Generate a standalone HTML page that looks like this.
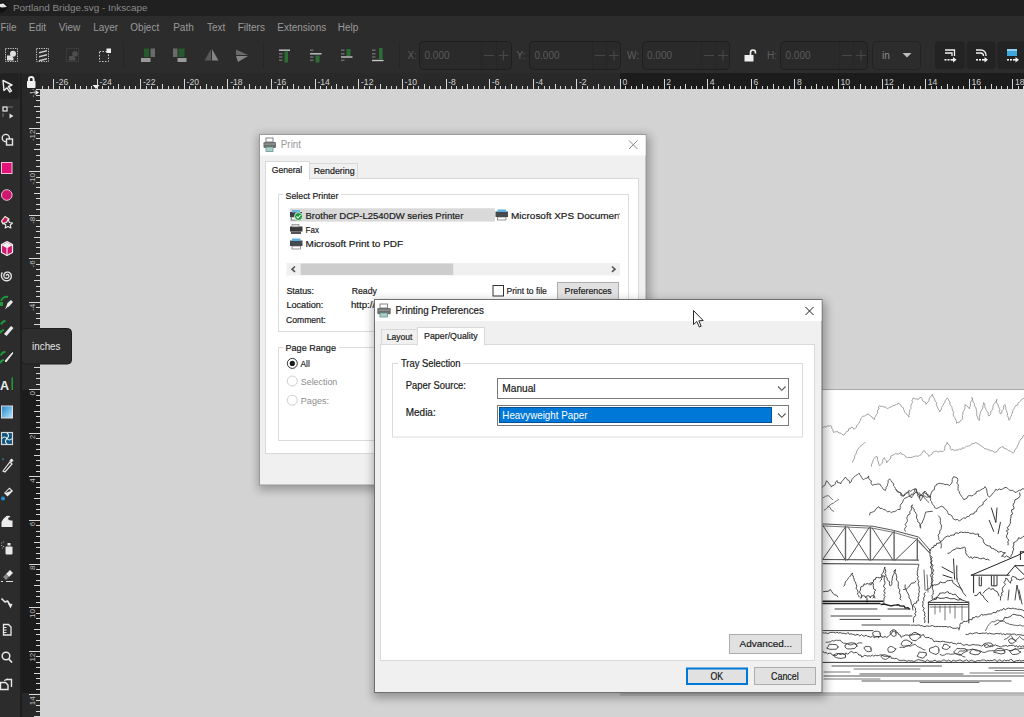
<!DOCTYPE html>
<html><head><meta charset="utf-8">
<style>
html,body{margin:0;padding:0;width:1024px;height:717px;overflow:hidden;background:#d3d3d3;}
svg{display:block;font-family:"Liberation Sans",sans-serif;}
</style></head>
<body>
<svg width="1024" height="717" viewBox="0 0 1024 717">
<defs>
<linearGradient id="shR" x1="0" x2="1" y1="0" y2="0"><stop offset="0" stop-color="#000" stop-opacity="0.22"/><stop offset="1" stop-color="#000" stop-opacity="0"/></linearGradient>
<linearGradient id="shL" x1="1" x2="0" y1="0" y2="0"><stop offset="0" stop-color="#000" stop-opacity="0.18"/><stop offset="1" stop-color="#000" stop-opacity="0"/></linearGradient>
<linearGradient id="shB" x1="0" x2="0" y1="0" y2="1"><stop offset="0" stop-color="#000" stop-opacity="0.22"/><stop offset="1" stop-color="#000" stop-opacity="0"/></linearGradient>
<linearGradient id="shT" x1="0" x2="0" y1="1" y2="0"><stop offset="0" stop-color="#000" stop-opacity="0.12"/><stop offset="1" stop-color="#000" stop-opacity="0"/></linearGradient>
<filter id="blur5" x="-20%" y="-20%" width="140%" height="140%"><feGaussianBlur stdDeviation="5"/></filter>
<filter id="blur3" x="-20%" y="-20%" width="140%" height="140%"><feGaussianBlur stdDeviation="3"/></filter>
</defs>
<!-- canvas -->
<rect x="0" y="0" width="1024" height="717" fill="#d3d3d3"/>
<!-- title bar -->
<rect x="0" y="0" width="1024" height="16" fill="#202020"/>
<path d="M0 3 L4 2 L8 7 L4 12 L0 13 Z" fill="#111"/>
<path d="M0 4 L3.5 3.5 L7 7 L2 7.5 L0 7 Z" fill="#e8e8e8"/>
<text x="13" y="11.3" font-size="9.9" fill="#8a8a8a">Portland Bridge.svg - Inkscape</text>

<!-- menu + toolbar -->
<rect x="0" y="16" width="1024" height="57" fill="#2c2c2c"/>
<g font-size="10" fill="#9a9a9a">
<text x="0.5" y="31.3">File</text>
<text x="28.8" y="31.3">Edit</text>
<text x="58.8" y="31.3">View</text>
<text x="93.2" y="31.3">Layer</text>
<text x="130.3" y="31.3">Object</text>
<text x="173.2" y="31.3">Path</text>
<text x="207" y="31.3">Text</text>
<text x="237.7" y="31.3">Filters</text>
<text x="277.3" y="31.3">Extensions</text>
<text x="337.8" y="31.3">Help</text>
</g>
<g id="toolbar">
<!-- icon1 select all -->
<rect x="5.5" y="48.5" width="12" height="13" fill="none" stroke="#d0d0d0" stroke-width="1" stroke-dasharray="1.2 1.2"/>
<circle cx="13" cy="53.8" r="3" fill="#e0e0e0"/>
<path d="M7 55.5 h4.5 l2 2.5 v2.5 h-6.5z" fill="#e0e0e0"/>
<!-- icon2 select all in all layers -->
<rect x="36.5" y="48.5" width="12" height="13" fill="none" stroke="#d0d0d0" stroke-width="1" stroke-dasharray="1.2 1.2"/>
<path d="M39 52 l8 -2 v1.5 l-8 2z M39 56 l8 -2 v1.5 l-8 2z M39 60 l8 -2 v1.5 l-8 2z" fill="#cfcfcf"/>
<!-- icon3 dim -->
<rect x="66.5" y="48.5" width="12" height="13" fill="none" stroke="#4a4a4a" stroke-width="1" stroke-dasharray="1.2 1.2"/>
<circle cx="75" cy="54" r="2.8" fill="#4e4e4e"/>
<path d="M69 56 h4.5 l2 2.5 v2 h-6.5z" fill="#4e4e4e"/>
<!-- icon4 -->
<rect x="99.5" y="51.5" width="9" height="10" fill="none" stroke="#cfcfcf" stroke-width="1" stroke-dasharray="1.5 1.5"/>
<rect x="106.5" y="48.5" width="4.5" height="4.5" fill="#efefef"/>
<line x1="123.5" y1="42" x2="123.5" y2="69" stroke="#262626"/>
<!-- rotate icons -->
<rect x="144" y="48.5" width="5" height="8.5" fill="#245a2c"/>
<rect x="150.5" y="48.5" width="4.5" height="8.5" fill="#6a6a6a"/>
<rect x="141" y="58" width="9.5" height="4" fill="#9a9a9a"/>
<rect x="173" y="48.5" width="4.5" height="8.5" fill="#6a6a6a"/>
<rect x="178.5" y="48.5" width="6" height="8.5" fill="#245a2c"/>
<rect x="177.5" y="58" width="9" height="4" fill="#9a9a9a"/>
<!-- flip -->
<path d="M211 49 L204.5 60.5 H211z" fill="#585858"/>
<path d="M212 49 L218.5 60.5 H212z" fill="#858585"/>
<path d="M236 49.5 L248 55 H236z" fill="#6a6a6a"/>
<path d="M236 56 L248 56 L238 62z" fill="#858585"/>
<line x1="263.5" y1="42" x2="263.5" y2="69" stroke="#262626"/>
<!-- align icons -->
<g stroke-width="1.4">
<line x1="279" y1="50.2" x2="290" y2="50.2" stroke="#c8c8c8"/>
<path d="M279 53.8h3.5M279 57h3.5M279 60.3h3.5" stroke="#6a6a6a"/>
<rect x="284.5" y="51.5" width="3.5" height="11" fill="#2a6e35" stroke="none"/>
<line x1="310" y1="53.8" x2="321.5" y2="53.8" stroke="#c8c8c8"/>
<path d="M310 50.2h3.5M310 57h3.5M310 60.3h3.5" stroke="#6a6a6a"/>
<rect x="315.5" y="55.5" width="4" height="7" fill="#2a6e35" stroke="none"/>
<line x1="341" y1="57" x2="352.5" y2="57" stroke="#c8c8c8"/>
<path d="M341 50.2h3.5M341 53.8h3.5M341 60.3h3.5" stroke="#6a6a6a"/>
<rect x="346.5" y="49" width="4" height="7" fill="#2a6e35" stroke="none"/>
<line x1="372" y1="60.5" x2="383.5" y2="60.5" stroke="#c8c8c8"/>
<path d="M372 50.2h3.5M372 53.8h3.5M372 57h3.5" stroke="#6a6a6a"/>
<rect x="379" y="48" width="3.5" height="11.5" fill="#2a6e35" stroke="none"/>
</g>
<line x1="399.5" y1="42" x2="399.5" y2="69" stroke="#262626"/>
<!-- spin boxes -->
<g font-size="10" fill="#5e5e5e">
<text x="407.5" y="59">X:</text>
<text x="516.5" y="59">Y:</text>
<text x="627" y="59">W:</text>
<text x="767" y="59">H:</text>
</g>
<g fill="#2a2a2a" stroke="#1f1f1f" stroke-width="1">
<rect x="419.5" y="41.5" width="92" height="28" rx="4"/>
<rect x="529.5" y="41.5" width="91" height="28" rx="4"/>
<rect x="642.5" y="41.5" width="87" height="28" rx="4"/>
<rect x="780.5" y="41.5" width="87" height="28" rx="4"/>
</g>
<g font-size="10" fill="#5a5a5a">
<text x="424.5" y="59">0.000</text>
<text x="534.5" y="59">0.000</text>
<text x="647" y="59">0.000</text>
<text x="785.5" y="59">0.000</text>
</g>
<g stroke="#262626" stroke-width="1">
<path d="M481.5 42v27M496.5 42v27"/>
<path d="M592.5 42v27M606.5 42v27"/>
<path d="M701.5 42v27M715.5 42v27"/>
<path d="M839.5 42v27M853.5 42v27"/>
</g>
<g stroke="#474747" stroke-width="1.2">
<path d="M484 55.5h10M498.5 55.5h10M503.5 50.5v10"/>
<path d="M595 55.5h10M609 55.5h10M614 50.5v10"/>
<path d="M704 55.5h10M718 55.5h10M723 50.5v10"/>
<path d="M842 55.5h10M856 55.5h10M861 50.5v10"/>
</g>
<!-- lock -->
<rect x="744.5" y="55" width="9" height="6.5" fill="#f0f0f0"/>
<path d="M750.5 55 v-2.5 a2.5 2.5 0 0 1 5 0 v1" fill="none" stroke="#f0f0f0" stroke-width="1.6"/>
<!-- units dropdown -->
<rect x="872.5" y="41.5" width="48" height="28" rx="4" fill="#2c2c2c" stroke="#232323"/>
<text x="882" y="59" font-size="10" fill="#8e8e8e">in</text>
<path d="M902.5 53 h9 l-4.5 4.5z" fill="#bdbdbd"/>
<!-- right buttons -->
<rect x="935" y="41.2" width="29.7" height="28" rx="4" fill="#232323"/>
<rect x="966.5" y="41.2" width="29" height="28" rx="4" fill="#232323"/>
<rect x="997.5" y="41.2" width="40" height="28" rx="4" fill="#232323"/>
<g fill="none" stroke="#f0f0f0" stroke-width="1.3">
<path d="M945 50h9.5v6M945 53h7v3"/>
<path d="M976 50h5a5 5 0 0 1 5 5v1M976 53h4.5a3 3 0 0 1 3 3"/>
</g>
<g fill="#f0f0f0">
<rect x="944.5" y="59" width="2" height="1.6"/><rect x="947.5" y="59" width="2" height="1.6"/><rect x="950.5" y="59" width="3" height="1.6"/><path d="M953 57 l3.5 2.8 l-3.5 2.8z"/>
<rect x="976" y="59" width="2" height="1.6"/><rect x="979" y="59" width="2" height="1.6"/><rect x="982" y="59" width="3" height="1.6"/><path d="M984.5 57 l3.5 2.8 l-3.5 2.8z"/>
<rect x="1007" y="59" width="2" height="1.6"/><rect x="1010" y="59" width="2" height="1.6"/><rect x="1013" y="59" width="3" height="1.6"/><path d="M1015.5 57 l3.5 2.8 l-3.5 2.8z"/>
</g>
<rect x="1007" y="49" width="10" height="7" fill="#3fa7e0"/>
<rect x="1007" y="49" width="10" height="2" fill="#8fd0f0"/>
</g>

<!-- rulers -->
<rect x="0" y="73" width="1024" height="16" fill="#292929"/>
<rect x="620" y="73" width="404" height="16" fill="#1c1c1c"/>
<rect x="0" y="73" width="21" height="644" fill="#2c2c2c"/>
<rect x="20" y="73" width="2" height="644" fill="#1e1e1e"/>
<rect x="22" y="73" width="18" height="644" fill="#292929"/>
<rect x="22" y="390" width="18" height="303" fill="#1c1c1c"/>
<path d="M42.5 86V89 M48.5 86V89 M53.5 79V89 M59.5 86V89 M64.5 86V89 M69.5 86V89 M75.5 84V89 M80.5 86V89 M86.5 86V89 M91.5 86V89 M97.5 79V89 M102.5 86V89 M108.5 86V89 M113.5 86V89 M118.5 84V89 M124.5 86V89 M129.5 86V89 M135.5 86V89 M140.5 79V89 M146.5 86V89 M151.5 86V89 M157.5 86V89 M162.5 84V89 M168.5 86V89 M173.5 86V89 M178.5 86V89 M184.5 79V89 M189.5 86V89 M195.5 86V89 M200.5 86V89 M206.5 84V89 M211.5 86V89 M217.5 86V89 M222.5 86V89 M227.5 79V89 M233.5 86V89 M238.5 86V89 M244.5 86V89 M249.5 84V89 M255.5 86V89 M260.5 86V89 M266.5 86V89 M271.5 79V89 M277.5 86V89 M282.5 86V89 M287.5 86V89 M293.5 84V89 M298.5 86V89 M304.5 86V89 M309.5 86V89 M315.5 79V89 M320.5 86V89 M326.5 86V89 M331.5 86V89 M336.5 84V89 M342.5 86V89 M347.5 86V89 M353.5 86V89 M358.5 79V89 M364.5 86V89 M369.5 86V89 M375.5 86V89 M380.5 84V89 M386.5 86V89 M391.5 86V89 M396.5 86V89 M402.5 79V89 M407.5 86V89 M413.5 86V89 M418.5 86V89 M424.5 84V89 M429.5 86V89 M435.5 86V89 M440.5 86V89 M446.5 79V89 M451.5 86V89 M456.5 86V89 M462.5 86V89 M467.5 84V89 M473.5 86V89 M478.5 86V89 M484.5 86V89 M489.5 79V89 M495.5 86V89 M500.5 86V89 M505.5 86V89 M511.5 84V89 M516.5 86V89 M522.5 86V89 M527.5 86V89 M533.5 79V89 M538.5 86V89 M544.5 86V89 M549.5 86V89 M555.5 84V89 M560.5 86V89 M565.5 86V89 M571.5 86V89 M576.5 79V89 M582.5 86V89 M587.5 86V89 M593.5 86V89 M598.5 84V89 M604.5 86V89 M609.5 86V89 M614.5 86V89 M620.5 79V89 M625.5 86V89 M631.5 86V89 M636.5 86V89 M642.5 84V89 M647.5 86V89 M653.5 86V89 M658.5 86V89 M664.5 79V89 M669.5 86V89 M674.5 86V89 M680.5 86V89 M685.5 84V89 M691.5 86V89 M696.5 86V89 M702.5 86V89 M707.5 79V89 M713.5 86V89 M718.5 86V89 M723.5 86V89 M729.5 84V89 M734.5 86V89 M740.5 86V89 M745.5 86V89 M751.5 79V89 M756.5 86V89 M762.5 86V89 M767.5 86V89 M773.5 84V89 M778.5 86V89 M783.5 86V89 M789.5 86V89 M794.5 79V89 M800.5 86V89 M805.5 86V89 M811.5 86V89 M816.5 84V89 M822.5 86V89 M827.5 86V89 M832.5 86V89 M838.5 79V89 M843.5 86V89 M849.5 86V89 M854.5 86V89 M860.5 84V89 M865.5 86V89 M871.5 86V89 M876.5 86V89 M882.5 79V89 M887.5 86V89 M892.5 86V89 M898.5 86V89 M903.5 84V89 M909.5 86V89 M914.5 86V89 M920.5 86V89 M925.5 79V89 M931.5 86V89 M936.5 86V89 M941.5 86V89 M947.5 84V89 M952.5 86V89 M958.5 86V89 M963.5 86V89 M969.5 79V89 M974.5 86V89 M980.5 86V89 M985.5 86V89 M991.5 84V89 M996.5 86V89 M1001.5 86V89 M1007.5 86V89 M1012.5 79V89 M1018.5 86V89 M1023.5 86V89" stroke="#d8d8d8" stroke-width="1" fill="none"/>
<g font-size="8.6" fill="#d0d0d0"><text x="55.8" y="84.8">-26</text><text x="99.4" y="84.8">-24</text><text x="143.0" y="84.8">-22</text><text x="186.6" y="84.8">-20</text><text x="230.2" y="84.8">-18</text><text x="273.8" y="84.8">-16</text><text x="317.4" y="84.8">-14</text><text x="361.0" y="84.8">-12</text><text x="404.6" y="84.8">-10</text><text x="448.2" y="84.8">-8</text><text x="491.8" y="84.8">-6</text><text x="535.4" y="84.8">-4</text><text x="579.0" y="84.8">-2</text><text x="622.6" y="84.8">0</text><text x="666.2" y="84.8">2</text><text x="709.8" y="84.8">4</text><text x="753.4" y="84.8">6</text><text x="797.0" y="84.8">8</text><text x="840.6" y="84.8">10</text><text x="884.2" y="84.8">12</text><text x="927.8" y="84.8">14</text><text x="971.4" y="84.8">16</text><text x="1015.0" y="84.8">18</text></g>
<path d="M92.5 85 h7 l-3.5 4z" fill="#f0f0f0"/>
<path d="M36 89.5H40 M36 95.5H40 M36 100.5H40 M34 106.5H40 M36 111.5H40 M36 117.5H40 M36 122.5H40 M29 128.5H40 M36 133.5H40 M36 138.5H40 M36 144.5H40 M34 149.5H40 M36 155.5H40 M36 160.5H40 M36 166.5H40 M29 171.5H40 M36 177.5H40 M36 182.5H40 M36 187.5H40 M34 193.5H40 M36 198.5H40 M36 204.5H40 M36 209.5H40 M29 215.5H40 M36 220.5H40 M36 226.5H40 M36 231.5H40 M34 237.5H40 M36 242.5H40 M36 247.5H40 M36 253.5H40 M29 258.5H40 M36 264.5H40 M36 269.5H40 M36 275.5H40 M34 280.5H40 M36 286.5H40 M36 291.5H40 M36 296.5H40 M29 302.5H40 M36 307.5H40 M36 313.5H40 M36 318.5H40 M34 324.5H40 M36 329.5H40 M36 335.5H40 M36 340.5H40 M29 346.5H40 M36 351.5H40 M36 356.5H40 M36 362.5H40 M34 367.5H40 M36 373.5H40 M36 378.5H40 M36 384.5H40 M29 389.5H40 M36 395.5H40 M36 400.5H40 M36 405.5H40 M34 411.5H40 M36 416.5H40 M36 422.5H40 M36 427.5H40 M29 433.5H40 M36 438.5H40 M36 444.5H40 M36 449.5H40 M34 455.5H40 M36 460.5H40 M36 465.5H40 M36 471.5H40 M29 476.5H40 M36 482.5H40 M36 487.5H40 M36 493.5H40 M34 498.5H40 M36 504.5H40 M36 509.5H40 M36 514.5H40 M29 520.5H40 M36 525.5H40 M36 531.5H40 M36 536.5H40 M34 542.5H40 M36 547.5H40 M36 553.5H40 M36 558.5H40 M29 564.5H40 M36 569.5H40 M36 574.5H40 M36 580.5H40 M34 585.5H40 M36 591.5H40 M36 596.5H40 M36 602.5H40 M29 607.5H40 M36 613.5H40 M36 618.5H40 M36 623.5H40 M34 629.5H40 M36 634.5H40 M36 640.5H40 M36 645.5H40 M29 651.5H40 M36 656.5H40 M36 662.5H40 M36 667.5H40 M34 673.5H40 M36 678.5H40 M36 683.5H40 M36 689.5H40 M29 694.5H40 M36 700.5H40 M36 705.5H40 M36 711.5H40 M34 716.5H40" stroke="#d8d8d8" stroke-width="1" fill="none"/>
<g font-size="8" fill="#bdbdbd"><text transform="translate(34.6 85.9) rotate(-90)" text-anchor="end">-14</text><text transform="translate(34.6 129.5) rotate(-90)" text-anchor="end">-12</text><text transform="translate(34.6 173.1) rotate(-90)" text-anchor="end">-10</text><text transform="translate(34.6 216.7) rotate(-90)" text-anchor="end">-8</text><text transform="translate(34.6 260.3) rotate(-90)" text-anchor="end">-6</text><text transform="translate(34.6 303.9) rotate(-90)" text-anchor="end">-4</text><text transform="translate(34.6 347.5) rotate(-90)" text-anchor="end">-2</text><text transform="translate(34.6 391.1) rotate(-90)" text-anchor="end">0</text><text transform="translate(34.6 434.7) rotate(-90)" text-anchor="end">2</text><text transform="translate(34.6 478.3) rotate(-90)" text-anchor="end">4</text><text transform="translate(34.6 521.9) rotate(-90)" text-anchor="end">6</text><text transform="translate(34.6 565.5) rotate(-90)" text-anchor="end">8</text><text transform="translate(34.6 609.1) rotate(-90)" text-anchor="end">10</text><text transform="translate(34.6 652.7) rotate(-90)" text-anchor="end">12</text><text transform="translate(34.6 696.3) rotate(-90)" text-anchor="end">14</text></g>
<path d="M35.5 90 l3.5 2.5 l-3.5 2.5z" fill="#f0f0f0"/>
<!-- canvas -->
<rect x="40" y="89" width="984" height="628" fill="#d3d3d3"/>
<g id="toolbox">
<rect x="0" y="73" width="19.5" height="26" rx="3" fill="#222"/>
<!-- selector arrow -->
<path d="M3 80.5 L12 85 L8.5 86.5 L11.5 91 L9.8 92 L7 87.8 L4 90.5z" fill="none" stroke="#ececec" stroke-width="1.4" stroke-linejoin="round"/>
<!-- node -->
<rect x="3" y="107" width="4" height="4" fill="none" stroke="#e0e0e0" stroke-width="1.3"/>
<path d="M8 107h5M3 113v4" stroke="#777" stroke-width="1"/>
<path d="M9.5 113.5 l4 2.5 l-4 2.5z" fill="#e0e0e0"/>
<!-- shape builder -->
<circle cx="5.8" cy="138" r="3.6" fill="none" stroke="#e8e8e8" stroke-width="1.4"/>
<rect x="6.5" y="139" width="6" height="6" fill="#2c2c2c" stroke="#e8e8e8" stroke-width="1.4"/>
<!-- rect -->
<rect x="1.5" y="162.5" width="10.5" height="11" fill="#e3127a" stroke="#f4c0dc" stroke-width="1"/>
<!-- ellipse -->
<circle cx="6.8" cy="195" r="5.3" fill="#d0176f" stroke="#f0c0d8" stroke-width="1"/>
<!-- star -->
<path d="M1.5 221 L5 216.5 L9 219 L7 223 L3 224z" fill="#c8166a" stroke="#eec" stroke-width="1.2" stroke-linejoin="round"/>
<path d="M8 219.5 l1.5 3 l3 .5 l-2.2 2 l.6 3 l-2.9 -1.5 l-2.8 1.5 l.6 -3 l-2.2 -2 l3 -.5z" fill="#2c2c2c" stroke="#eee" stroke-width="1.1" stroke-linejoin="round"/>
<!-- 3d box -->
<path d="M7 241.5 L12.5 244.5 V252.5 L7 255.5 L1.5 252.5 V244.5z" fill="#d21670" stroke="#eee" stroke-width="1.2" stroke-linejoin="round"/>
<path d="M1.5 244.5 L7 247.5 L12.5 244.5 M7 247.5 V255.5" fill="none" stroke="#eee" stroke-width="1.1"/>
<path d="M2.2 245 L7 242.2 L11.8 245 L7 247.2z" fill="#f0f0f0"/>
<!-- spiral -->
<path d="M6.40 275.80 L6.37 275.74 L6.34 275.67 L6.32 275.60 L6.30 275.52 L6.30 275.44 L6.31 275.36 L6.32 275.27 L6.35 275.18 L6.38 275.09 L6.43 275.01 L6.49 274.93 L6.56 274.85 L6.64 274.77 L6.73 274.71 L6.83 274.65 L6.94 274.60 L7.05 274.57 L7.18 274.54 L7.30 274.52 L7.43 274.52 L7.57 274.54 L7.70 274.56 L7.84 274.61 L7.97 274.66 L8.10 274.73 L8.23 274.82 L8.35 274.92 L8.46 275.03 L8.56 275.16 L8.65 275.30 L8.73 275.45 L8.79 275.61 L8.83 275.78 L8.87 275.96 L8.88 276.14 L8.87 276.33 L8.85 276.52 L8.81 276.71 L8.74 276.89 L8.66 277.08 L8.56 277.26 L8.44 277.42 L8.30 277.58 L8.15 277.73 L7.97 277.87 L7.79 277.98 L7.59 278.08 L7.37 278.17 L7.15 278.23 L6.92 278.27 L6.68 278.29 L6.44 278.28 L6.19 278.25 L5.95 278.20 L5.71 278.12 L5.47 278.02 L5.24 277.89 L5.03 277.74 L4.82 277.57 L4.63 277.38 L4.46 277.16 L4.31 276.93 L4.18 276.68 L4.07 276.42 L3.99 276.14 L3.93 275.86 L3.90 275.56 L3.90 275.26 L3.93 274.96 L3.99 274.66 L4.08 274.36 L4.19 274.07 L4.34 273.79 L4.52 273.53 L4.72 273.27 L4.94 273.04 L5.20 272.82 L5.47 272.63 L5.76 272.47 L6.08 272.33 L6.40 272.22 L6.74 272.14 L7.09 272.10 L7.45 272.08 L7.81 272.11 L8.16 272.16 L8.52 272.26 L8.86 272.38 L9.20 272.54 L9.52 272.74 L9.83 272.97 L10.11 273.22 L10.37 273.51 L10.61 273.82 L10.81 274.16 L10.99 274.51 L11.13 274.89 L11.23 275.28 L11.30 275.68 L11.33 276.09 L11.32 276.51 L11.27 276.93 L11.18 277.34 L11.05 277.74 L10.88 278.14 L10.67 278.52 L10.42 278.88 L10.14 279.22 L9.83 279.53 L9.48 279.81 L9.10 280.06 L8.70 280.28 L8.28 280.45 L7.84 280.59 L7.39 280.69 L6.92 280.74 L6.45 280.75 L5.98 280.71 L5.50 280.63 L5.04 280.50 L4.59 280.32 L4.15 280.10 L3.73 279.84 L3.33 279.54 L2.97 279.20 L2.63 278.83 L2.33 278.42 L2.07 277.98 L1.85 277.51 L1.68 277.02 L1.55 276.52 L1.47 276.00 L1.43 275.47 L1.45 274.94 L1.52 274.41 L1.64 273.88 L1.82 273.37 L2.04 272.87 L2.31 272.39" fill="none" stroke="#e0e0e0" stroke-width="1.4"/>
<!-- pen -->
<path d="M1 301 a6 6 0 0 1 7 -4" fill="none" stroke="#1e9a3a" stroke-width="2"/>
<rect x="0" y="302" width="3" height="4" fill="#1e9a3a"/>
<path d="M5 310 L7.5 303 L11 300 L13 302 L10 305.5z" fill="#eaeaea"/>
<path d="M5 310 l3 -3" stroke="#2c2c2c" stroke-width="0.8"/>
<!-- pencil -->
<path d="M1 324.5 a5 5 0 0 1 4.5 -3.5 M0.5 333.5 a4 3 0 0 1 3.5 -3.5" fill="none" stroke="#1e9a3a" stroke-width="2"/>
<path d="M4 334 L11 326 L13.5 328 L6.5 336z" fill="#eaeaea"/>
<!-- calligraphy -->
<path d="M1 355.5 a4 4 0 0 1 4.5 -3.5 M0.5 363.5 a4 3 0 0 1 3.5 -3.5" fill="none" stroke="#1e9a3a" stroke-width="2"/>
<path d="M5 361 L12.5 352.5 L13 353 L6 362z" fill="#eaeaea" stroke="#eaeaea" stroke-width="1"/>
<!-- text -->
<text x="0" y="390" font-size="12.5" font-weight="bold" fill="#ececec">A</text>
<rect x="11.5" y="377.5" width="1.5" height="12.5" fill="#1e9a3a"/>
<!-- gradient -->
<linearGradient id="gicon" x1="0" y1="0" x2="1" y2="1"><stop offset="0" stop-color="#1d86cf"/><stop offset="1" stop-color="#bfe8fb"/></linearGradient>
<rect x="1.5" y="406" width="11" height="12" fill="url(#gicon)" stroke="#dcdcdc" stroke-width="1"/>
<!-- mesh -->
<rect x="1.5" y="432.5" width="11" height="12" fill="#11547d" stroke="#d8d8d8" stroke-width="1.2"/>
<path d="M2 438.5 q2.5 -3 5 0 t5 0 M7 433 q3 2.5 0 5.5 t0 5.5" fill="none" stroke="#e8f4fc" stroke-width="1.1"/>
<!-- dropper -->
<path d="M3 457.5 q-1.5 2 0 3.2 q1.5 -1.2 0 -3.2z" fill="#2090e0"/>
<path d="M3 471 L10 462 L12 464 L5 472z" fill="none" stroke="#e8e8e8" stroke-width="1.2"/>
<rect x="10" y="459" width="3" height="3" fill="#e8e8e8" transform="rotate(40 11.5 460.5)"/>
<!-- bucket -->
<path d="M4 493 L9.5 487.5 L13 491 L7.5 496.5z" fill="#e8e8e8"/>
<path d="M5 493 L9.5 489 L11 491z" fill="#2c2c2c"/>
<circle cx="3" cy="498.5" r="2" fill="#2090e0"/>
<!-- tweak -->
<path d="M1.5 527 V522 q2 -4 5 -6 q2.5 -1 4 1 q-2.5 0 -2.5 2 q1.5 2 4.5 1.5 V527z" fill="#ececec"/>
<!-- spray -->
<rect x="5.5" y="546.5" width="7" height="8" rx="1" fill="#e8e8e8"/>
<rect x="7.5" y="543" width="3" height="2.5" fill="#e8e8e8"/>
<path d="M1 543h1.2M3 542h1.2M1 545.5h1.2M3 546.5h1.2M2 548h1.2" stroke="#999" stroke-width="1.2"/>
<!-- eraser -->
<path d="M6 574 L10 570 L13 573 L9 577z" fill="#eaeaea"/>
<path d="M3 577 L6 574 L9 577 L6 580z" fill="#888"/>
<path d="M1 581.5h2M6 581.5h7" stroke="#ddd" stroke-width="1.2"/>
<!-- connector -->
<path d="M1.5 598.5 L5 602 L7.5 601 L10 605" fill="none" stroke="#e8e8e8" stroke-width="1.6" stroke-linejoin="round"/>
<path d="M8 603.5 L12.5 604 L10.5 608.5z" fill="#e8e8e8"/>
<!-- pages -->
<path d="M3.5 624.5 h5 l2.5 2.5 v8 h-7.5z" fill="none" stroke="#e8e8e8" stroke-width="1.3"/>
<path d="M4 627.5h2.5M4 630h2.5M4 632.5h2.5" stroke="#e8e8e8" stroke-width="1"/>
<!-- zoom -->
<circle cx="6" cy="656" r="3.8" fill="none" stroke="#e8e8e8" stroke-width="1.5"/>
<path d="M8.8 659 L12 662.5" stroke="#e8e8e8" stroke-width="1.8"/>
<!-- clone -->
<path d="M6 679.5 h5.5 v7.5" fill="none" stroke="#e8e8e8" stroke-width="1.4"/>
<path d="M0.5 682.5 h5 l2.5 2.5 v4.5 h-7.5z" fill="none" stroke="#e8e8e8" stroke-width="1.4"/>
<path d="M4 680.5 l4 -1.5" stroke="#e8e8e8" stroke-width="1.2"/>
</g>
<!-- ruler corner lock -->
<rect x="22" y="73" width="18" height="16" fill="#292929"/>
<path d="M22.5 89 V77.5 a4 4 0 0 1 4 -4 H40 V89z" fill="#242424"/>
<rect x="27" y="81" width="8.5" height="7" rx="0.8" fill="#f0f0f0"/>
<path d="M28.9 81.5 v-2.2 a2.35 2.35 0 0 1 4.7 0 v2.2" fill="none" stroke="#f0f0f0" stroke-width="2"/>

<g id="page">
<rect x="620" y="392" width="404" height="304" fill="#000" opacity="0.10"/>
<rect x="620" y="390" width="404" height="302.5" fill="#fff"/>
<path d="M620 389.5 H1024 M620 693 H1024" stroke="#a8a8a8" stroke-width="1"/>
<g fill="none" stroke-linejoin="round" stroke-linecap="round">
<path d="M822.9 427.5 L824.4 426.8 L826.1 427.1 L827.3 425.9 L829.0 426.1 L830.7 425.5 L831.7 426.8 L831.7 428.5 L833.0 429.7 L833.1 431.4 L833.4 432.3 L835.6 431.8 L837.9 431.7 L838.9 433.0 L840.7 433.0 L841.9 433.9 L843.1 435.1 L844.6 434.3 L845.5 432.8 L846.5 431.5 L848.3 431.0 L848.6 428.9 L850.5 428.6 L851.6 426.9 L853.3 428.0 L854.1 429.4 L855.1 428.3 L856.6 427.3 L856.6 425.6 L858.0 424.6 L858.9 423.3 L859.4 421.8 L860.4 420.6 L860.7 419.0 L861.5 417.7 L862.7 416.3 L864.7 416.0 L866.3 414.8 L868.3 413.8 L869.3 415.2 L870.7 416.1 L872.1 417.0 L872.9 418.6 L874.7 419.4 L874.6 417.7 L875.7 416.3 L876.2 414.8 L877.2 413.4 L877.6 411.9 L877.6 410.1 L879.1 409.0 L878.5 407.0 L879.6 405.6 L881.0 406.6 L882.7 406.3 L884.0 407.2 L885.7 407.2 L887.1 408.5 L888.5 408.1 L889.8 407.2 L891.4 407.0 L892.5 405.7 L894.1 405.6 L895.4 404.9 L896.8 404.3 L898.1 403.5 L899.1 403.3 L899.8 404.6 L901.2 405.6 L901.9 407.0 L903.4 407.8 L903.5 409.6 L904.5 410.9 L904.9 412.4 L906.0 413.6 L907.4 414.5 L908.2 415.8 L909.1 417.2 L908.6 415.6 L909.5 414.2 L909.4 412.6 L909.7 411.1 L909.9 409.6 L911.2 408.3 L910.7 406.6 L911.1 405.2 L911.7 403.7 L912.6 402.4 L911.9 400.7 L912.7 399.3 L913.1 397.9 L914.7 398.7 L916.5 399.0 L918.6 399.3 L919.5 397.8 L921.1 397.2 L922.0 398.4 L922.3 400.0 L923.1 401.3 L924.9 401.9 L925.8 403.1 L926.0 404.4 L926.8 403.1 L927.9 402.0 L928.8 400.8 L929.2 399.2 L929.6 397.7 L930.9 396.7 L931.7 395.4 L932.5 394.2 L932.6 395.9 L933.6 397.3 L934.4 398.7 L934.9 400.2 L935.4 401.7 L936.8 402.9 L936.3 404.8 L937.1 406.2 L937.6 407.7 L938.3 409.2 L939.4 410.5 L939.8 411.9 L940.1 410.4 L941.5 409.4 L941.6 407.6 L942.3 406.3 L943.2 405.0 L943.9 403.6 L944.8 402.4 L945.2 400.8 L945.9 399.4 L947.6 398.1 L948.5 399.4 L948.9 400.9 L950.1 402.0 L949.8 403.8 L950.6 405.2 L951.7 406.5 L952.1 408.1 L952.4 409.7 L952.9 411.2 L953.7 412.6 L953.2 414.5 L953.5 416.1 L954.7 417.4 L955.2 418.9 L956.2 420.3 L956.6 421.8 L956.5 423.3 L957.7 422.4 L959.4 422.3 L960.3 420.7 L961.1 420.2 L962.7 418.9 L962.5 417.2 L962.3 415.5 L963.1 414.0 L962.8 412.3 L963.8 410.9 L964.7 409.4 L964.9 407.8 L964.9 406.2 L965.2 404.4 L966.5 405.9 L968.1 407.1 L969.6 408.9 L969.7 407.2 L970.5 405.6 L970.3 403.8 L970.6 402.1 L971.8 400.7 L972.5 399.1 L971.8 397.4 L972.3 398.9 L972.7 400.5 L973.2 402.0 L974.3 403.3 L974.4 405.0 L975.0 406.4 L975.9 407.9 L976.3 409.4 L976.4 411.0 L976.8 412.5 L976.7 414.2 L976.7 415.9 L977.8 417.2 L977.6 418.9 L979.3 420.5 L979.6 419.0 L979.3 417.3 L979.5 415.8 L980.0 414.3 L980.4 412.8 L980.8 411.3 L981.8 410.0 L982.6 408.7 L983.0 407.2 L982.9 405.5 L983.6 404.1 L983.4 402.7 L984.9 403.9 L984.7 405.7 L985.0 407.3 L985.7 408.8 L986.4 410.3 L987.3 411.7 L988.3 413.0 L988.0 414.8 L988.8 416.1 L990.0 415.0 L990.8 413.7 L990.7 411.9 L991.3 410.5 L992.7 409.5 L993.0 407.9 L992.9 406.2 L993.5 404.8 L994.1 403.4 L995.7 402.4 L996.2 401.0 L996.9 399.3 L996.4 401.0 L996.6 402.5 L997.4 403.9 L998.2 405.2 L998.4 406.8 L999.4 408.1 L999.9 409.5 L999.0 411.3 L999.9 412.7 L1000.5 414.1 L1001.8 412.8 L1001.8 410.9 L1003.1 409.6 L1003.7 408.0 L1003.6 406.0 L1005.0 404.5 L1005.4 406.1 L1005.9 407.6 L1005.8 409.3 L1006.7 410.8 L1006.9 412.4 L1007.7 413.9 L1007.1 415.7 L1008.3 417.1 L1008.5 418.7 L1009.0 420.3 L1010.1 419.1 L1010.1 417.4 L1011.4 416.2 L1011.5 414.6 L1012.2 413.1 L1012.8 411.7 L1012.8 410.0 L1014.0 408.7 L1014.8 407.2 L1015.7 405.7 L1017.6 405.0 L1018.0 403.1 L1019.4 402.1 L1020.7 400.9 L1021.5 399.5 L1023.2 398.5 L1025.0 398.0" stroke="#8c8c8c" stroke-width="0.8"/>
<path d="M852.4 462.2 L853.4 460.1 L854.5 458.1 L854.7 455.7 L856.1 453.8 L856.6 451.6 L857.6 449.5 L858.9 447.8 L860.3 446.2 L861.9 445.0 L863.6 443.8 L865.0 442.3" stroke="#888" stroke-width="0.8"/>
<path d="M871.5 466.2 L871.5 464.4 L872.3 462.9 L872.8 461.2 L873.4 459.6 L874.1 458.2 L875.5 457.1 L877.0 456.4 L877.5 458.0 L877.4 459.8 L878.2 461.3 L878.5 463.0 L878.9 464.6 L879.7 465.8 L880.9 464.4 L882.2 463.1 L882.8 461.4 L882.7 459.4 L884.5 457.7 L885.1 459.6 L886.5 461.0 L886.7 462.8 L887.3 461.3 L888.9 460.5 L889.8 459.2 L890.8 458.0 L890.8 456.1 L892.1 455.3 L893.8 454.8 L895.3 453.6 L897.2 454.2 L899.0 453.9 L900.7 452.5 L901.6 454.2 L903.4 454.4 L904.7 455.4 L905.7 456.8 L907.3 457.5 L908.8 457.5 L910.4 457.6 L912.0 457.3 L913.6 456.7 L915.1 456.2 L916.7 456.0 L918.3 456.2 L919.5 455.5 L921.1 454.6 L922.0 453.2 L922.6 451.6 L924.4 450.6 L925.1 452.1 L926.3 453.3 L927.8 454.2 L928.8 456.5 L930.2 455.2 L931.9 454.3 L932.7 452.3 L934.6 451.4 L936.3 451.1 L938.0 452.1 L939.6 451.4 L941.3 451.2 L942.9 451.7 L944.2 450.4 L944.8 448.7 L944.8 446.9 L945.4 445.2 L947.0 444.1 L947.1 442.3 L947.8 444.0 L949.4 445.1 L950.3 446.7 L950.3 448.7 L951.4 450.0 L953.0 449.4 L954.8 450.5 L956.4 450.0 L958.1 450.1 L959.5 449.1 L961.3 449.4 L962.3 447.8 L964.2 448.2 L965.4 447.1 L966.7 446.3 L968.3 446.0 L969.9 445.8 L971.0 444.4 L972.3 443.6 L974.0 443.5 L975.6 442.5 L977.0 443.2 L978.4 444.1 L979.8 444.7 L981.0 445.8 L982.3 446.7 L983.7 447.5 L984.8 448.9 L986.5 448.9 L987.9 449.8 L989.5 450.0 L990.9 450.8 L992.6 451.0 L993.9 451.9 L994.8 452.3 L996.8 451.8 L997.9 450.3 L998.8 448.7 L1000.3 447.7 L1001.3 447.0 L1003.3 446.8 L1004.3 448.5 L1006.0 448.8 L1007.4 449.6 L1008.6 450.8 L1010.3 451.1 L1011.7 452.0 L1013.3 452.9 L1014.5 451.8 L1014.6 449.9 L1016.0 448.9 L1016.7 447.5 L1017.5 446.1 L1018.0 444.5 L1018.8 443.1 L1019.3 441.5 L1020.2 440.2 L1021.0 438.8 L1022.6 437.9 L1022.9 436.2 L1024.0 435.0" stroke="#8a8a8a" stroke-width="0.8"/>
<path d="M822.1 487.9 L822.7 486.4 L824.6 485.6 L825.4 484.1 L825.8 482.5 L826.6 480.7 L827.7 481.9 L828.7 483.2 L829.5 484.6 L830.9 485.5 L831.4 487.1 L832.2 485.7 L834.2 485.2 L835.3 484.0 L835.7 482.2 L837.0 480.5 L837.6 482.6 L839.7 482.8 L840.7 484.0 L841.2 481.9 L842.8 480.6 L844.0 479.0 L845.1 477.3 L846.6 478.2 L847.2 479.8 L848.9 480.4 L849.6 482.0 L849.7 483.1 L851.2 481.8 L851.7 479.9 L852.7 478.4 L854.3 477.0 L855.7 475.5 L857.7 474.6 L859.2 473.1 L859.8 474.7 L860.8 476.0 L861.7 477.4 L862.4 478.9 L863.8 479.8 L865.1 478.4 L867.3 478.1 L868.7 475.9 L868.6 478.1 L869.5 479.7 L871.4 480.9 L870.9 483.2 L872.4 485.3 L874.4 484.5 L876.6 484.3 L878.2 483.9 L880.3 484.4 L881.1 486.2 L882.4 487.6 L883.2 489.3 L885.4 490.5 L886.0 488.9 L886.2 487.2 L887.3 485.9 L887.6 484.2 L888.2 482.6 L888.0 480.8 L889.6 478.8 L890.9 480.5 L892.0 482.4 L893.8 483.7 L893.5 485.9 L894.8 487.1 L895.5 488.6 L896.4 490.1 L897.2 491.7 L899.0 492.4 L901.0 492.8 L901.8 495.0 L904.0 495.9 L905.0 494.6 L906.3 493.5 L907.8 492.7 L908.7 490.6 L910.8 491.3 L912.4 489.9 L914.2 489.1 L916.6 489.2 L916.4 491.1 L917.9 492.4 L917.6 494.4 L917.8 496.2 L919.2 497.5 L920.0 499.1 L920.4 500.8 L921.4 499.4 L922.2 497.9 L922.7 496.2 L923.4 494.6 L923.2 492.7 L925.0 491.0 L926.3 492.4 L927.0 494.4 L928.9 495.2 L930.0 496.8" stroke="#4a4a4a" stroke-width="0.9"/>
<path d="M823.1 497.8 L825.4 496.3 L828.3 495.6 L830.5 497.6 L832.6 499.7" stroke="#555" stroke-width="0.8"/>
<path d="M838.7 499.5 L836.9 500.6 L835.2 501.6 L833.6 503.1 L831.7 503.9 L830.0 505.0 L828.1 506.8 L826.4 508.8 L824.2 510.2" stroke="#555" stroke-width="0.8"/>
<path d="M827.7 506.3 L830.1 507.5 L831.3 510.0 L833.6 511.3" stroke="#555" stroke-width="0.8"/>
<path d="M869.6 515.0 L870.1 512.7 L871.8 512.3 L873.5 511.7 L875.0 510.8 L875.9 509.1 L877.0 507.9 L878.8 506.7 L879.9 508.5 L882.0 508.2 L883.3 509.5 L885.1 509.7 L886.4 510.8 L887.8 511.9 L889.7 511.2 L891.3 512.8 L892.8 511.7 L894.7 511.6 L896.3 510.7 L897.7 509.4 L900.1 509.5 L900.2 507.6 L900.2 505.7 L900.9 504.1 L902.3 502.9 L902.9 501.3 L903.5 499.4 L905.1 498.2 L907.0 497.4 L908.7 496.4 L910.6 496.1 L911.3 494.1 L913.4 494.2 L914.9 493.4 L916.3 491.5 L917.1 493.6 L918.8 494.3 L920.1 495.5 L922.0 495.7 L923.6 496.0 L925.2 496.1 L926.7 497.3 L928.4 496.8 L930.0 496.8" stroke="#444" stroke-width="0.9"/>
<path d="M895.9 489.4 L896.9 490.6 L898.2 491.5 L899.6 492.4 L900.7 493.6 L900.9 495.6 L902.2 496.0 L904.0 496.0 L904.4 494.1 L905.5 493.3 L906.9 492.7 L908.5 491.5 L909.0 493.1 L908.9 495.0 L909.9 496.4 L911.8 497.7 L912.2 496.2 L913.2 495.2 L913.9 493.9 L914.0 492.4 L914.9 491.2 L914.4 489.4 L915.4 488.6 L916.4 490.0 L916.5 491.6 L917.3 493.0 L918.4 494.3 L919.4 495.6 L919.7 497.9 L919.8 495.8 L921.4 495.1 L922.3 493.8 L923.3 492.7 L924.4 492.1 L924.9 493.5 L926.8 493.8 L927.2 495.3 L928.6 496.1 L929.2 497.4" stroke="#444" stroke-width="0.9"/>
<path d="M930.1 496.8 L930.6 495.2 L931.0 493.6 L931.7 492.1 L932.5 490.6 L934.4 489.7 L934.5 487.9 L934.8 486.2 L936.6 485.2 L936.5 484.3 L938.4 483.6 L940.2 483.3 L941.8 483.7 L943.5 483.8 L945.1 484.6 L946.9 484.4 L948.5 484.9 L949.7 485.5 L950.8 484.2 L951.9 482.9 L952.2 481.4 L952.2 479.6 L952.8 478.1 L953.5 476.7 L955.2 477.1 L957.1 477.9 L957.8 479.5 L957.7 481.3 L956.7 483.2 L958.5 484.7 L958.1 486.6 L958.1 488.3 L957.9 490.1 L959.4 491.7 L959.4 493.2 L960.6 494.6 L961.4 496.2 L962.5 497.6 L963.8 499.8 L965.3 499.0 L966.9 498.3 L967.8 496.2 L969.3 495.5 L971.3 495.9 L973.0 495.5 L974.2 494.2 L975.9 493.6 L976.3 491.7 L977.9 491.1 L979.6 490.8 L980.9 489.8 L982.3 489.0 L983.8 488.4 L985.1 486.6 L986.1 488.2 L986.8 489.9 L986.9 491.8 L987.4 493.6 L987.7 495.5 L989.5 497.1 L990.7 495.6 L992.2 494.5 L993.2 492.7 L994.6 491.5 L995.7 489.3 L997.7 490.2 L999.1 488.9 L1001.1 489.7 L1002.6 488.9 L1004.2 487.9 L1006.2 487.3 L1007.6 488.3 L1008.8 489.6 L1010.2 490.5 L1012.2 490.3 L1013.7 491.0 L1014.9 492.4 L1016.5 492.0 L1017.9 491.1 L1019.3 490.2 L1021.0 490.3 L1022.2 488.7 L1024.0 489.0" stroke="#444" stroke-width="0.9"/>
<path d="M930.3 496.7 L930.7 498.4 L930.5 500.3 L931.7 501.7 L931.9 503.5 L933.3 504.8 L934.3 506.2 L934.4 507.5 L936.4 508.6 L938.1 507.9 L939.8 507.0 L941.5 506.3 L943.4 506.9 L944.3 508.5 L945.8 509.5 L947.1 510.7 L947.7 512.6 L948.4 514.2 L950.5 514.8 L951.9 515.9 L952.6 517.6 L953.5 519.1 L955.3 519.9 L957.3 519.4 L959.3 520.8 L960.8 520.0 L962.2 518.9 L963.6 517.8 L965.7 518.4 L966.8 516.6 L968.8 516.6 L970.0 514.8 L971.7 514.0 L973.9 513.9 L974.4 512.1 L976.4 511.7 L976.9 510.0 L977.7 508.4 L978.8 507.2 L980.2 506.2 L981.6 505.3 L983.1 504.5 L983.2 502.3 L984.6 501.4 L985.5 500.0 L987.0 499.1" stroke="#444" stroke-width="0.9"/>
<path d="M1019.5 492.9 L1020.2 495.3 L1019.5 496.7 L1018.6 498.0 L1017.1 498.8 L1015.1 499.7 L1014.6 501.2 L1014.5 502.7 L1013.4 504.0 L1013.1 505.5 L1014.0 507.4 L1013.8 509.0 L1011.6 509.9 L1011.6 511.7 L1012.8 513.8 L1010.9 515.0 L1011.1 516.8 L1010.7 518.4 L1010.4 520.1 L1010.4 521.7 L1010.4 523.4 L1009.4 524.8 L1008.8 526.3 L1007.1 527.6 L1008.6 529.6 L1006.3 530.7 L1007.7 532.4 L1007.5 534.0 L1006.5 535.7 L1006.6 537.2 L1007.7 538.7 L1008.7 540.2 L1007.8 541.9 L1008.2 543.4 L1008.0 545.0" stroke="#333" stroke-width="0.9"/>
<path d="M991.4 508 L995.9 522.5 L997 508 M989.2 520.3 L993.7 531.4 M1000.4 522.5 L998.1 533.7" stroke="#333" stroke-width="1.0"/>
<path d="M905.4 531.3 L904.5 529.4 L905.1 527.9 L906.4 526.5 L905.2 524.6 L906.2 523.1 L907.2 521.7 L907.4 520.2 L906.8 518.1 L907.4 516.5 L908.1 514.9 L910.1 513.9 L909.6 511.9 L910.9 510.4 L911.7 508.7 L911.2 506.7 L912.4 504.8 L911.8 506.7 L913.0 507.9 L914.2 509.0 L914.0 510.8 L915.3 511.9 L916.0 513.5 L917.0 514.9 L916.4 517.0 L916.7 518.7 L917.8 520.1 L917.7 521.8 L919.8 523.0 L919.9 524.7 L920.0 526.4 L920.4 528.0" stroke="#444" stroke-width="0.9"/>
<path d="M919.4 492.8 L920.7 494.7 L922.8 496.0 L924.3 497.7 L925.7 499.4 L927.3 500.9 L928.9 502.4" stroke="#444" stroke-width="0.9"/>
<path d="M920.7 527.3 L920.3 524.7 L922.1 523.1 L922.8 520.9 L923.7 518.9 L924.5 516.8 L925.0 514.6 L925.5 512.2 L927.8 511.8 L930.0 511.5 L932.3 511.3" stroke="#444" stroke-width="0.9"/>
<path d="M938.5 515.9 L940.2 517.9 L940.5 520.3 L940.1 522.8 L941.4 525.1 L941.4 527.2 L941.0 529.2 L939.7 531.0 L939.7 533.1 L938.1 535.1 L938.7 537.3 L938.8 539.5 L940.4 541.4 L941.1 543.6 L941.4 545.7 L941.0 548.0" stroke="#444" stroke-width="0.9"/>
<path d="M823 523.9 L873.4 526.3 L893.5 530.4 L918.5 537 L930.3 550.6" stroke="#555" stroke-width="1.0"/>
<path d="M823 525.9 L873.4 528.3 L893.5 532.4 L917.5 539.3 L929.3 552.6" stroke="#666" stroke-width="0.9"/>
<path d="M823 559.5 L918.5 560.1 M823 563.6 L918.5 564.2" stroke="#555" stroke-width="1.1"/>
<path d="M845.5 526.5 V560 M870.4 527.5 V560 M894.1 531 V560 M917.3 538.5 V560" stroke="#666" stroke-width="1.4"/>
<path d="M823 525.7 L845.5 560.1 M823 558.9 L845.5 526.9 M847.9 526.9 L869.2 560.1 M847.9 560.1 L869.2 527.5 M872.2 528 L893 560.1 M872.2 560.1 L893 532.2 M895.3 560.1 L916.1 539.9 M918.5 541.7 L929.7 553" stroke="#555" stroke-width="1.0"/>
<path d="M843.7 586.2 L844.8 585.0 L845.0 583.4 L845.4 581.9 L846.4 580.7 L847.5 579.5 L848.2 578.2 L849.3 577.1 L850.5 575.9 L851.2 574.5 L852.6 572.9 L851.9 574.8 L853.4 575.9 L853.4 577.6 L854.2 579.0 L854.1 580.7 L855.5 581.9 L855.8 583.4 L856.3 584.9 L856.8 586.3 L856.0 588.1 L856.9 589.5 L857.8 590.9 L858.1 592.4 L857.4 594.2 L858.7 595.4 L859.1 596.9" stroke="#333" stroke-width="0.9"/>
<path d="M880.0 581.3 L881.4 580.0 L881.5 578.3 L882.5 576.9 L881.4 574.9 L882.4 573.5 L883.4 572.1 L883.8 570.5 L884.3 569.0 L884.8 567.0 L884.8 568.6 L885.5 570.1 L885.8 571.7 L884.9 573.6 L886.0 575.0 L885.8 576.7 L887.2 577.9 L887.1 579.7 L888.5 580.7 L889.5 581.9 L889.4 583.7 L889.8 585.2 L890.5 586.1 L891.7 584.7 L892.0 583.2 L891.7 581.6 L892.2 580.1 L892.2 578.5 L892.6 577.0 L893.0 575.5 L893.9 574.2 L894.3 572.7 L893.9 571.0 L895.6 569.4 L895.3 571.1 L895.0 572.7 L896.2 574.1 L896.4 575.7 L896.9 577.2 L896.2 579.0 L896.9 580.4 L898.1 581.8 L898.4 583.3 L898.2 585.0 L898.2 586.5 L898.4 588.0 L899.6 589.4 L899.8 590.9 L899.2 592.6 L900.0 594.0 L900.5 595.4 L900.7 596.9 L899.9 598.7 L901.0 600.0" stroke="#333" stroke-width="0.9"/>
<path d="M861.0 598.0 A2.0 2.0 0 0 1 865.7 598.0 A2.3 2.3 0 0 1 870.3 598.0 A2.0 2.0 0 0 1 875.0 598.0" stroke="#333" stroke-width="0.9"/>
<path d="M860.8 598.0 L861.5 596.3 L861.6 594.7 L860.1 593.2 L859.6 591.7 L860.4 590.3 L860.5 588.2 L861.2 586.5 L863.7 585.9 L864.0 583.8 L865.7 584.4 L867.2 583.4 L868.9 584.2 L870.4 583.1 L872.6 582.7 L873.5 584.0 L873.1 585.8 L873.5 587.3 L873.6 588.9 L875.8 590.2 L874.4 591.5 L874.5 593.3 L873.8 594.8 L874.1 596.6 L873.0 598.0" stroke="#333" stroke-width="0.9"/>
<path d="M867 598 V602" stroke="#333" stroke-width="1"/>
<path d="M823.5 591.7 L825.7 591.4 L828.1 591.3 L830.4 589.5 L831.6 591.4 L832.8 593.1 L834.2 594.7 L836.6 595.2 L837.8 596.9" stroke="#333" stroke-width="0.9"/>
<path d="M903.6 589.5 L906.5 588.9 L908.5 587.3 L910.0 585.0 L911.6 583.1 L914.4 582.9 L916.0 581.0" stroke="#333" stroke-width="0.9"/>
<path d="M869.8 584.9 L871.6 584.4 L872.2 582.8 L873.5 581.9 L873.5 579.9 L875.4 579.5 L875.9 577.5 L877.6 577.4 L879.4 577.9 L881.0 577.4 L882.2 575.8 L884.6 576.0 L884.3 577.5 L884.1 579.1 L884.4 580.7 L885.0 582.2 L884.8 583.8 L883.9 585.3 L883.6 586.9 L885.4 588.4 L884.4 590.0 L883.9 591.6 L885.3 593.3 L883.6 594.8 L885.0 596.5 L884.0 598.1 L884.0 599.7 L883.8 601.4 L884.0 603.0" stroke="#333" stroke-width="0.9"/>
<path d="M918.9 564.9 L918.4 566.5 L917.8 568.2 L917.9 569.9 L917.2 571.6 L917.4 573.3 L917.1 575.0 L918.3 576.5 L917.4 578.4 L918.0 580.0 L918.9 581.6 L918.1 583.4 L918.4 585.0 L919.0 586.5 L919.4 588.0 L918.8 589.5 L919.4 591.1 L919.2 592.5 L918.5 594.0 L919.1 595.6 L918.3 597.0 L918.1 598.5 L918.7 600.6 L916.7 601.1 L916.4 603.1 L914.3 603.4 L913.0 605.2 L914.1 606.8 L915.6 608.2 L915.4 610.3 L916.2 612.1 L914.7 613.4 L915.9 615.5 L914.1 616.8 L913.4 618.4 L913.5 620.2 L913.5 622.0" stroke="#333" stroke-width="0.9"/>
<path d="M930.9 556.1 L932.3 557.5 L930.9 559.2 L932.0 560.7 L931.3 562.3 L931.5 563.9 L933.2 565.3 L932.1 567.0 L932.0 568.5 L933.9 570.1 L933.2 571.5 L932.3 573.0 L933.4 574.5 L931.8 575.9 L932.9 577.5 L931.8 579.0 L933.0 580.5 L932.2 582.0 L931.3 583.4 L932.6 585.0 L932.6 586.5 L932.2 588.0 L932.7 589.5 L933.3 590.9 L933.1 592.5 L933.3 594.0 L931.8 595.6 L932.4 597.0 L932.1 598.6 L933.0 600.0" stroke="#333" stroke-width="0.9"/>
<path d="M925.4 592.5 L923.9 593.9 L925.0 595.7 L924.0 597.1 L923.6 598.7 L923.9 600.3 L922.7 601.8 L923.1 603.4 L922.8 605.0 L922.6 606.8 L924.4 608.2 L923.0 610.2 L924.1 611.7 L924.9 613.3 L924.4 615.0 L925.4 616.5 L923.9 618.0 L924.7 619.5 L925.0 621.0 L924.7 622.5" stroke="#333" stroke-width="0.9"/>
<path d="M924 570 L925 590 M927 575 L928 592" stroke="#444" stroke-width="0.8"/>
<path d="M930.3 550.4 L931.1 548.9 L931.9 547.5 L933.7 547.4 L934.0 545.3 L936.1 545.5 L936.5 543.6 L938.1 543.2 L939.9 542.9 L940.9 541.3 L942.4 540.6 L943.5 539.1 L944.5 537.7 L946.0 536.8 L947.6 536.0 L949.5 536.4 L950.8 535.4 L952.4 535.0 L954.1 535.2 L955.1 533.2 L956.8 532.8 L958.4 533.5 L960.0 532.2 L961.6 532.1 L963.2 532.7 L964.8 532.2 L966.4 532.6 L968.1 532.3 L969.6 533.2 L971.3 533.5 L973.1 533.1 L974.6 534.2 L976.3 534.2 L978.6 534.0 L978.5 536.4 L980.6 536.9 L981.9 538.1 L983.1 539.3 L983.4 541.4 L984.1 543.1 L985.4 544.5 L987.1 545.4 L988.6 545.9 L990.2 546.1 L991.0 548.0 L992.5 548.5 L994.1 548.8 L995.2 550.1 L996.8 550.4 L998.0 552.1 L999.7 551.9 L1001.5 551.3 L1003.0 552.8 L1005.5 552.8 L1003.6 553.8 L1002.8 555.4 L1001.5 556.3 L1003.2 555.9 L1004.8 557.4 L1006.5 555.8 L1008.2 556.9 L1009.8 557.7 L1010.8 556.6 L1011.3 555.1 L1012.4 553.7 L1012.5 552.1 L1013.1 550.6 L1013.8 549.1 L1012.9 547.3 L1013.5 545.8 L1013.8 544.2 L1013.7 542.6 L1015.3 541.9 L1016.6 540.8 L1017.9 539.9 L1018.5 537.8 L1020.7 538.4 L1022.4 537.3 L1024.0 536.0" stroke="#333" stroke-width="0.9"/>
<path d="M947.9 553.3 L949.6 553.1 L950.8 551.8 L952.1 550.7 L953.5 549.8 L955.1 549.3 L956.5 548.1 L958.3 548.2 L960.1 548.6 L961.6 548.0 L963.2 547.8 L964.2 546.8 L965.4 548.1 L965.3 549.7 L965.9 551.2 L965.6 552.8 L966.5 554.2 L967.1 555.3 L968.2 556.5 L969.4 557.7 L971.3 556.8 L972.5 558.7 L974.2 556.9 L975.8 557.4 L977.5 557.4 L979.2 558.4 L980.8 558.8 L982.3 558.4 L984.3 558.1 L985.6 559.7 L987.6 559.2 L989.2 560.1" stroke="#333" stroke-width="0.9"/>
<path d="M953.5 559 L954.6 579.1 M942 567 L953 573 M943 575 L952 578 M956.8 565.7 L956.8 579.1" stroke="#333" stroke-width="1.0"/>
<path d="M957.2 578.9 L957.1 581.2 L958.3 582.8 L959.1 584.7 L960.0 586.5 L960.4 588.5 L962.0 590.0 L962.9 592.3 L964.4 594.2 L966.0 596.0" stroke="#333" stroke-width="0.9"/>
<path d="M929.4 550.0 L930.2 552.1 L929.9 554.3 L930.3 556.4 L930.9 558.6 L931.2 560.7 L930.7 562.9 L931.7 565.0 L930.4 567.1 L931.6 569.2 L931.8 571.2 L931.7 573.3 L930.4 575.4 L931.4 577.5 L931.7 579.6 L931.9 581.6 L931.9 583.7 L931.2 585.8" stroke="#333" stroke-width="0.9"/>
<path d="M926.2 590.3 L927.5 589.4 L928.9 588.7 L930.3 587.9 L930.9 585.9 L932.8 586.0 L933.9 584.7 L935.8 585.0 L937.4 584.4 L939.1 583.9 L940.1 581.8 L942.1 582.7 L943.7 582.7 L945.4 582.6 L946.9 580.7 L948.6 580.7 L950.3 580.4 L952.6 580.3 L952.8 582.6 L954.1 583.7 L955.6 584.6 L956.6 586.0 L958.1 586.8 L959.8 587.4 L961.3 588.3 L962.0 590.0" stroke="#333" stroke-width="0.9"/>
<path d="M934.4 599.5 L936.4 599.1 L936.5 597.2 L937.7 596.2 L938.9 595.1 L939.8 593.1 L941.5 593.1 L943.1 592.8 L944.9 593.2 L946.3 592.1 L948.1 591.7 L949.0 593.5 L950.8 593.2 L951.9 594.4 L953.5 594.6 L955.5 594.2 L956.5 595.9 L957.9 596.9 L958.9 598.4 L960.8 598.8 L962.0 600.0" stroke="#333" stroke-width="0.9"/>
<path d="M971.3 575.2 L1017.1 555.7 L1024 552 M971.3 575.2 H1009.3 M1007 575.2 L1014.9 565.7 L1024 574.6 M1014.9 565.7 H1024 M973.6 575.8 V592.5 M1020.4 551.8 V559.6 M1024 551.8 H1020.4" stroke="#222" stroke-width="1.0"/>
<path d="M979.2 576.9 V585.8 H981.4 V576.9 M991.4 575.8 V585.8 H997 V575.8 M994 576 V585.8" stroke="#333" stroke-width="1.0"/>
<path d="M1000.4 600.1 L1000.6 598.4 L1000.5 596.5 L1002.2 595.2 L1001.2 593.1 L1003.1 591.9 L1002.4 589.8 L1002.4 588.3 L1003.2 586.9 L1004.6 585.6 L1005.4 584.2 L1003.9 582.3 L1005.2 581.0 L1005.6 579.5 L1005.5 578.4 L1007.5 578.9 L1008.0 580.5 L1009.2 581.6 L1010.6 583.3 L1010.2 581.4 L1012.0 580.5 L1011.4 578.6 L1011.9 577.2 L1012.8 576.3 L1014.3 577.0 L1016.0 577.4 L1016.6 579.2 L1017.7 579.2 L1019.7 580.0 L1021.1 579.4 L1022.7 579.0 L1024.0 578.0" stroke="#333" stroke-width="0.9"/>
<path d="M1008 600 L1009 590 M1015 600 L1017 585 L1020 600 M1019 590 L1022 604" stroke="#333" stroke-width="0.9"/>
<path d="M983.2 593.2 L984.8 591.1 L986.9 589.5 L989.1 587.8 L990.8 589.4 L993.3 588.5 L994.4 590.4 L997.1 591.5 L998.2 593.7 L999.0 596.0" stroke="#333" stroke-width="0.9"/>
<path d="M974.7 595.6 L977.2 595.3 L978.3 593.3 L980.2 591.9 L980.7 594.4 L983.1 595.7 L984.1 597.9 L986.0 600.0 L988.0 602.0" stroke="#333" stroke-width="0.9"/>
<path d="M928.4 602.4 H968.8 V622.9 M928.4 602.4 V622.9 M929 604.6 H968" stroke="#333" stroke-width="1.0"/>
<path d="M930 607 H968 M935 606 V614 M945 606 V620 M955 606 V618 M962 606 V620 M940 606 V612 M950 606 V613" stroke="#555" stroke-width="0.8"/>
<path d="M928.2 602.3 L930.2 601.3 L932.1 600.2 L933.9 598.8 L936.0 597.8 L938.0 597.5 L940.0 598.5 L942.0 598.2 L944.0 598.3 L946.0 597.5 L948.0 597.9 L949.9 598.7 L952.0 598.8 L954.1 598.5 L956.0 599.3 L957.9 600.2 L960.1 599.6 L962.3 600.1 L964.5 600.7 L966.5 601.8 L968.8 602.0" stroke="#333" stroke-width="0.9"/>
<path d="M822.8 601.3 H882.8 M822.8 603.4 H880" stroke="#222" stroke-width="1.5"/>
<path d="M881.3 604.5 L883.7 604.0 L885.8 604.5 L887.9 605.1 L890.0 605.7 L892.0 605.8 L893.9 605.1 L896.0 605.1 L898.0 604.7 L899.7 605.7 L901.7 606.1 L904.0 606.0 L905.3 608.1 L907.7 607.6 L909.3 609.0" stroke="#222" stroke-width="1.4"/>
<path d="M888 609 H910" stroke="#333" stroke-width="1.0"/>
<path d="M905.2 584.9 L905.0 587.4 L906.0 589.4 L906.8 591.5 L908.0 593.5 L909.0 595.6 L909.1 597.9 L910.6 599.8 L911.0 601.9 L911.4 603.9 L912.5 605.8 L912.6 608.0 L913.0 610.0" stroke="#333" stroke-width="0.9"/>
<path d="M835 609 H877 M831 616 H912 M840 619.4 H880 M862 625 H910 M822.8 630.6 H873" stroke="#444" stroke-width="1.0"/>
<path d="M911.3 625.2 L912.8 625.2 L914.3 625.0 L915.8 625.4 L917.4 625.2 L919.0 624.8 L920.4 625.8 L922.0 625.5 L923.4 626.3 L925.0 626.7 L926.5 625.9 L928.0 626.1 L929.5 626.4 L931.0 625.9 L932.5 625.5 L934.0 626.4 L935.5 626.7 L937.0 626.5 L938.5 626.4 L939.9 626.6 L941.5 626.5 L943.1 626.7 L944.8 626.5 L946.4 626.5 L947.9 627.3 L949.6 626.5 L951.1 627.3 L952.6 628.2 L954.2 628.3 L955.8 628.3 L957.5 627.8 L959.0 628.5" stroke="#333" stroke-width="0.9"/>
<path d="M958.9 630.0 L959.3 628.2 L959.9 626.5 L959.9 624.6 L960.5 623.2 L962.4 623.2 L963.6 621.2 L965.5 621.5 L967.3 621.2 L968.7 619.9 L970.2 619.5 L972.0 619.8 L972.6 617.5 L974.4 617.8 L975.5 616.5 L977.4 617.0 L978.8 616.8 L980.2 615.6 L981.5 614.5 L983.3 615.1 L984.8 614.7 L986.4 614.8 L987.9 614.1 L989.5 614.0 L991.1 614.1 L992.5 613.1 L994.0 612.3 L996.0 612.8 L997.1 610.8 L999.0 611.1 L1000.4 610.0 L1002.3 610.1 L1003.7 608.2 L1005.2 610.0 L1006.8 608.7 L1008.3 608.1 L1009.9 608.5 L1011.4 608.8 L1013.0 608.0 L1014.5 608.8 L1016.1 608.8 L1017.5 609.4 L1019.3 609.2 L1020.9 609.6 L1022.6 610.0 L1024.0 611.0" stroke="#333" stroke-width="0.9"/>
<path d="M966.0 634.4 L967.6 634.6 L969.1 633.8 L970.6 633.2 L972.3 634.0 L973.8 633.3 L975.3 632.9 L976.8 632.6 L978.5 633.6 L980.0 633.5 L981.6 633.3 L983.2 633.1 L984.7 633.3 L986.3 632.8 L987.9 634.1 L989.5 633.2 L991.1 633.7 L992.6 634.0 L994.2 634.1 L995.8 633.6 L997.4 633.4 L999.0 633.9 L1000.6 633.3 L1002.1 634.5 L1003.7 633.8 L1005.2 634.7 L1006.8 633.8 L1008.4 634.1 L1010.0 634.0 L1011.5 634.4 L1013.1 634.1 L1014.7 634.0 L1016.2 635.2 L1017.8 634.6 L1019.3 634.7 L1020.9 634.9 L1022.4 635.3 L1024.0 635.4" stroke="#333" stroke-width="0.9"/>
<path d="M994.9 624.9 L996.8 624.0 L998.5 622.9 L999.9 621.3 L1002.1 620.9 L1003.7 619.6 L1004.7 617.3 L1007.2 617.7 L1009.2 617.0 L1011.2 616.0 L1012.8 614.3 L1014.8 614.5 L1017.2 615.2 L1019.8 615.3 L1022.1 616.3 L1024.0 618.0" stroke="#333" stroke-width="0.9"/>
<path d="M985.5 630.5 L986.6 628.6 L987.5 626.5 L988.7 624.8 L990.2 623.2 L991.9 621.6 L994.1 621.9 L995.9 620.8 L997.9 620.0 L999.8 620.6 L1001.8 621.2 L1004.2 621.1 L1005.8 623.0 L1007.9 623.4 L1009.9 624.4 L1012.0 624.6 L1013.9 625.2 L1015.9 625.3 L1017.9 625.7 L1020.1 624.9 L1022.0 626.0 L1024.0 626.0" stroke="#444" stroke-width="0.8"/>
<path d="M822.8 632.8 L824.4 633.2 L825.9 632.7 L827.5 633.6 L829.1 633.0 L830.7 632.4 L832.2 632.4 L833.8 632.3 L835.4 633.0 L836.9 632.2 L838.5 633.1 L840.1 632.5 L841.6 633.2 L843.2 633.3 L844.8 633.4 L846.3 634.1 L848.0 632.4 L849.3 634.3 L850.9 633.8 L852.4 634.2 L853.9 634.6 L855.3 635.2 L857.0 634.5 L858.5 634.8 L859.8 636.0 L861.6 634.5 L862.9 635.8 L864.5 636.1 L866.1 635.1 L867.6 636.4 L869.2 636.6 L870.8 637.3 L872.6 636.2 L874.1 637.6 L875.8 636.8 L877.4 636.8 L878.9 637.6 L880.5 635.9 L882.0 637.2 L883.6 637.1 L885.2 636.5 L886.7 637.5 L888.1 636.6 L889.3 635.4 L890.4 634.1 L891.9 633.0 L892.6 630.7 L894.4 631.6 L896.3 632.1 L898.0 632.8 L898.5 634.4 L900.3 635.2 L901.1 637.4 L902.4 636.2 L904.0 635.9 L905.4 635.0 L907.1 635.0 L908.9 635.4 L910.3 634.4 L911.9 634.2 L913.2 632.8 L914.9 632.4 L916.6 632.9 L918.1 633.9 L919.8 634.6 L921.3 635.4 L923.6 634.6 L924.3 636.5 L925.5 637.5 L927.2 637.6 L929.0 637.4 L930.1 638.5 L931.8 638.7 L932.9 639.7 L934.0 641.8 L935.7 641.2 L937.3 641.3 L939.0 641.6 L940.6 641.8 L942.3 641.2 L943.8 641.5 L945.4 641.9 L946.9 642.3 L948.5 642.4 L950.0 642.9 L951.7 642.3 L953.1 643.5 L954.8 643.4 L956.3 644.3 L957.9 643.1 L959.3 643.4 L960.9 643.2 L962.3 644.8 L963.7 645.2 L965.3 644.8 L966.8 644.3 L968.3 645.3 L969.8 645.3 L971.3 645.0 L972.8 644.5 L974.3 644.7 L975.8 645.0 L977.3 644.9 L978.8 645.1 L980.3 645.6 L981.8 646.2 L983.4 644.5 L984.8 645.6 L986.4 644.6 L987.9 644.8 L989.3 646.2 L990.9 645.8 L992.3 646.5 L993.9 645.6 L995.4 644.8 L996.9 645.6 L998.4 646.0 L999.9 646.8 L1001.4 646.9 L1002.9 645.9 L1004.4 645.9 L1005.9 645.3 L1007.4 646.4 L1009.0 645.6 L1010.5 645.5 L1012.0 645.3 L1013.5 645.3 L1015.0 646.7 L1016.5 645.6 L1017.9 647.4 L1019.5 645.6 L1021.0 647.3 L1022.5 645.8 L1024.0 646.6" stroke="#333" stroke-width="0.9"/>
<path d="M823.0 651.3 L824.3 653.0 L826.1 652.5 L827.5 653.9 L829.4 653.2 L831.0 653.3 L832.3 655.1 L834.1 655.4 L835.6 655.5 L837.0 655.1 L838.4 653.6 L840.0 654.5 L841.5 654.4 L842.9 653.7 L844.6 654.5 L845.9 652.9 L847.6 654.1 L849.0 653.4 L850.3 651.8 L851.8 651.6 L853.4 652.7 L854.6 652.7 L856.7 652.3 L857.9 653.6 L858.8 655.1 L860.8 655.0 L861.8 657.1 L863.3 656.3 L864.7 655.3 L866.3 655.8 L867.8 656.1 L869.3 655.8 L870.8 656.2 L872.3 655.0 L873.8 656.2 L875.3 655.2 L876.8 655.7 L878.3 655.6 L879.8 655.0 L881.3 654.9 L882.7 655.6 L884.1 656.3 L885.6 656.3 L887.2 656.3 L888.9 656.2 L890.5 656.2 L891.5 658.3 L893.1 658.2 L894.6 658.8 L896.3 658.3 L897.7 659.2 L899.0 660.3 L900.5 660.4 L902.2 660.4 L903.7 660.2 L905.3 660.5 L907.0 661.4 L908.6 660.4 L910.2 661.0 L911.9 660.8 L913.5 661.4 L915.1 661.2 L916.7 660.2 L918.4 659.6 L920.0 660.1 L921.5 660.4 L923.0 660.8 L924.5 661.2 L926.0 661.4 L927.5 659.7 L929.0 661.3 L930.6 661.2 L932.1 661.3 L933.6 660.7 L935.1 660.1 L936.6 661.3 L938.1 661.2 L939.6 661.0 L941.1 661.4 L942.6 660.3 L944.1 659.8 L945.6 660.7 L947.1 661.2 L948.6 660.0 L950.1 661.1 L951.7 661.5 L953.2 660.1 L954.7 660.8 L956.2 661.0 L957.7 660.5 L959.2 660.0 L960.7 660.1 L962.2 661.1 L963.7 661.2 L965.2 660.5 L966.7 659.8 L968.2 661.2 L969.7 661.1 L971.2 660.1 L972.8 660.8 L974.3 661.4 L975.8 661.4 L977.3 660.6 L978.8 660.6 L980.3 660.8 L981.8 660.0 L983.3 660.0 L984.8 660.0 L986.3 661.0 L987.8 660.3 L989.3 660.7 L990.8 660.4 L992.3 660.6 L993.9 659.9 L995.4 659.7 L996.9 661.6 L998.4 660.3 L999.9 659.8 L1001.4 660.9 L1002.9 661.2 L1004.4 659.9 L1005.9 660.8 L1007.4 660.3 L1008.9 660.6 L1010.4 659.6 L1011.9 659.7 L1013.4 661.6 L1015.0 661.3 L1016.5 660.6 L1018.0 660.7 L1019.5 660.1 L1021.0 661.2 L1022.5 660.5 L1024.0 660.6" stroke="#333" stroke-width="0.9"/>
<path d="M895.7 649.0 L894.4 651.1 L891.8 652.3 L888.6 652.1 L887.8 649.9 L888.1 648.2 L889.3 646.8 L891.6 646.5 L893.4 647.5 L895.7 649.0Z" stroke="#333" stroke-width="0.85"/>
<path d="M938.9 650.0 L938.8 652.6 L936.0 654.5 L932.6 653.3 L929.5 651.6 L929.6 648.4 L933.1 647.3 L935.9 646.0 L938.6 647.6 L938.9 650.0Z" stroke="#333" stroke-width="0.85"/>
<path d="M880.2 634.0 L880.6 636.3 L877.6 636.6 L875.0 636.6 L873.1 635.1 L872.6 632.8 L874.9 631.3 L877.6 631.3 L879.9 632.2 L880.2 634.0Z" stroke="#333" stroke-width="0.85"/>
<path d="M895.9 633.0 L896.2 635.3 L893.7 636.5 L891.5 635.2 L890.5 633.8 L890.2 632.1 L891.4 630.6 L893.7 629.6 L896.1 630.8 L895.9 633.0Z" stroke="#333" stroke-width="0.85"/>
<path d="M920.6 637.0 L918.0 638.7 L916.0 640.8 L912.3 640.2 L910.1 638.2 L909.4 635.6 L913.1 634.7 L915.7 634.2 L919.2 634.5 L920.6 637.0Z" stroke="#333" stroke-width="0.85"/>
<path d="M911.9 643.0 L910.0 645.4 L906.8 646.0 L903.5 646.1 L900.9 644.3 L902.3 642.0 L903.8 640.3 L906.8 640.0 L909.1 641.2 L911.9 643.0Z" stroke="#333" stroke-width="0.85"/>
<path d="M949.9 647.0 L948.5 648.6 L946.6 649.5 L944.4 649.1 L942.0 648.1 L943.2 646.2 L943.9 644.2 L946.6 644.5 L948.3 645.5 L949.9 647.0Z" stroke="#333" stroke-width="0.85"/>
<path d="M967.0 651.0 L963.9 652.6 L961.2 654.5 L956.6 654.0 L953.5 652.2 L955.4 650.2 L957.1 648.5 L960.8 648.7 L965.4 648.7 L967.0 651.0Z" stroke="#333" stroke-width="0.85"/>
<path d="M980.6 652.0 L979.0 654.0 L975.8 654.8 L972.7 654.3 L969.7 653.1 L970.5 651.0 L972.4 649.3 L975.7 649.6 L978.3 650.4 L980.6 652.0Z" stroke="#333" stroke-width="0.85"/>
<path d="M1004.7 651.0 L1004.9 653.1 L1001.0 654.0 L997.6 653.1 L993.6 652.2 L995.1 650.1 L997.2 648.6 L1000.9 648.6 L1004.0 649.3 L1004.7 651.0Z" stroke="#333" stroke-width="0.85"/>
<path d="M1020.6 652.0 L1018.4 653.7 L1015.7 654.4 L1012.6 654.5 L1010.8 652.9 L1009.6 650.8 L1013.0 649.9 L1016.0 648.5 L1018.0 650.5 L1020.6 652.0Z" stroke="#333" stroke-width="0.85"/>
<path d="M856.9 646.0 L854.8 648.4 L850.9 648.9 L847.1 648.9 L845.0 647.1 L845.1 645.0 L847.5 643.5 L851.0 642.8 L855.5 643.3 L856.9 646.0Z" stroke="#333" stroke-width="0.85"/>
<path d="M838.0 647.0 L836.5 649.2 L832.7 649.3 L829.8 649.3 L826.6 648.2 L828.4 646.2 L829.3 644.2 L832.8 644.4 L836.6 644.7 L838.0 647.0Z" stroke="#333" stroke-width="0.85"/>
<path d="M871.0 649.0 L871.4 651.1 L868.6 651.7 L866.4 651.1 L865.2 649.8 L863.8 647.8 L866.0 646.4 L868.6 646.5 L870.9 647.2 L871.0 649.0Z" stroke="#333" stroke-width="0.85"/>
<path d="M889.6 657.0 L887.6 658.4 L885.7 659.5 L883.4 658.8 L881.9 657.7 L880.9 656.1 L882.9 654.7 L885.6 654.9 L887.4 655.7 L889.6 657.0Z" stroke="#333" stroke-width="0.85"/>
<path d="M845.5 656.0 L845.5 657.6 L841.2 658.4 L836.9 657.9 L834.5 656.7 L833.3 655.1 L836.3 653.7 L841.4 653.3 L845.4 654.4 L845.5 656.0Z" stroke="#333" stroke-width="0.85"/>
<path d="M926.2 655.0 L925.0 656.5 L922.9 658.2 L919.7 657.4 L917.0 656.1 L918.4 654.2 L919.2 652.1 L922.8 652.3 L926.3 652.8 L926.2 655.0Z" stroke="#333" stroke-width="0.85"/>
<path d="M992.6 645.0 L991.0 646.6 L988.5 646.9 L985.7 647.5 L984.4 645.8 L983.7 644.0 L986.3 643.1 L988.6 642.9 L991.4 643.2 L992.6 645.0Z" stroke="#333" stroke-width="0.85"/>
<path d="M1015.7 641.0 L1014.5 642.3 L1012.6 643.3 L1010.0 643.2 L1009.2 641.6 L1008.3 640.2 L1010.1 638.9 L1012.7 638.6 L1014.5 639.7 L1015.7 641.0Z" stroke="#333" stroke-width="0.85"/>
<path d="M826.1 642.3 L828.1 642.2 L830.1 641.9 L832.0 640.7 L834.1 641.0 L836.0 640.1 L837.8 640.4 L840.3 640.2 L841.8 642.2 L843.7 643.2 L846.0 643.3 L848.0 644.2 L850.0 645.0 L852.0 644.7 L853.9 643.6 L856.1 644.7 L857.9 643.2 L859.9 642.8 L862.0 643.0" stroke="#333" stroke-width="0.8"/>
<path d="M899.9 647.4 L902.1 647.2 L904.4 647.6 L906.3 646.0 L908.4 645.7 L910.8 646.2 L912.8 645.0 L915.3 644.3 L916.9 646.1 L918.9 647.1 L921.0 648.0 L922.9 649.3 L925.0 650.0" stroke="#333" stroke-width="0.8"/>
<path d="M940.0 654.4 L942.2 655.4 L944.3 655.1 L946.4 653.8 L948.5 653.8 L950.7 654.3 L952.9 654.1 L955.1 653.7 L957.2 654.0 L959.0 655.1 L961.2 655.2 L963.0 656.5 L965.0 657.0" stroke="#333" stroke-width="0.8"/>
<path d="M958.1 652.6 L959.9 651.0 L962.0 651.1 L964.1 650.9 L965.9 649.5 L968.1 650.0 L969.9 649.7 L972.2 649.3 L974.3 649.7 L976.3 650.8 L978.6 650.8 L980.7 651.0 L982.7 652.3 L985.1 652.4 L987.1 651.4 L989.3 650.9 L991.5 650.7 L993.7 650.6 L996.0 651.1 L998.0 650.5 L1000.0 650.7 L1002.0 650.5 L1004.0 650.6 L1006.0 649.3 L1008.0 650.0 L1010.0 650.7 L1012.1 650.7 L1013.9 649.3 L1016.0 649.2 L1018.0 649.2 L1020.0 648.5 L1022.0 648.4 L1024.0 648.0" stroke="#333" stroke-width="0.8"/>
<path d="M1004.5 639.4 L1006.6 638.6 L1008.3 637.3 L1010.5 635.3 L1012.1 636.8 L1012.8 639.3 L1015.3 640.4 L1017.2 639.3 L1018.5 637.5 L1019.6 636.4 L1021.5 638.5 L1024.0 640.0" stroke="#333" stroke-width="0.8"/>
<path d="M822.8 662.4 H1024" stroke="#333" stroke-width="1.0"/>
<path d="M832 666 H941.5 M989 668 H1024 M860 674 H963 M824 676 H1024 M862 681 H1011" stroke="#555" stroke-width="1.2"/>
<path d="M854 669 H920 M995 670.5 H1024 M824 679 H880 M920 682.5 H979 M824 672 H850 M970 673 H1024" stroke="#666" stroke-width="0.9"/>
</g>
</g>

<g id="print">
<!-- shadow -->
<rect x="258" y="135" width="392" height="355" fill="#000" opacity="0.28" filter="url(#blur5)"/>
<rect x="259.5" y="134.5" width="386.5" height="350.5" fill="#f0f0f0" stroke="#9a9a9a" stroke-width="1"/>
<rect x="260" y="135" width="385.5" height="20.5" fill="#ffffff"/>
<!-- printer icon -->
<g transform="translate(263 138)">
<rect x="3" y="0" width="7" height="4" fill="#fff" stroke="#777" stroke-width="0.9"/>
<rect x="0.5" y="4" width="12.5" height="6" rx="1.2" fill="#6e7070"/>
<rect x="1.5" y="5.5" width="10.5" height="1.2" fill="#9a9c9c"/>
<rect x="3" y="9" width="7" height="4.5" fill="#a7d0cc" stroke="#6b8f8b" stroke-width="0.8"/>
</g>
<text transform="translate(280.80 148.2) scale(0.9864 1)" font-size="10.0" fill="#9a9a9a">Print</text>
<path d="M629 140.5 L637.5 149 M637.5 140.5 L629 149" stroke="#8a8a8a" stroke-width="1"/>
<!-- tabs -->
<rect x="309.5" y="163.5" width="48" height="15" fill="#f0f0f0" stroke="#d9d9d9"/>
<rect x="265.5" y="178.5" width="373" height="275" fill="#fff" stroke="#d9d9d9"/>
<rect x="265.5" y="161.5" width="44" height="17.5" fill="#fff" stroke="#d9d9d9"/>
<rect x="266" y="177" width="43" height="3" fill="#fff"/>
<text transform="translate(271.70 173.3) scale(0.9054 1)" font-size="9.5" fill="#1a1a1a" stroke="#1a1a1a" stroke-width="0.2">General</text>
<text transform="translate(313.70 174.4) scale(0.9345 1)" font-size="9.5" fill="#1a1a1a" stroke="#1a1a1a" stroke-width="0.2">Rendering</text>
<!-- select printer group -->
<rect x="278.5" y="194.5" width="350" height="137" fill="none" stroke="#dcdcdc"/>
<rect x="283" y="189" width="58" height="9" fill="#fff"/>
<text transform="translate(285.60 198.6) scale(0.9268 1)" font-size="9.5" fill="#1a1a1a" stroke="#1a1a1a" stroke-width="0.2">Select Printer</text>
<rect x="290" y="208.3" width="205" height="13.3" fill="#d9d9d9"/>
<!-- printer icons -->
<g transform="translate(290 209)">
<rect x="0" y="3" width="12" height="5" fill="#3a3f44"/>
<rect x="2" y="1" width="8" height="2.5" fill="#72b6e0"/>
<rect x="1.5" y="8" width="9" height="3" fill="#fff" stroke="#555" stroke-width="0.6"/>
<circle cx="8.5" cy="7.5" r="4" fill="#1e9a3a" stroke="#fff" stroke-width="0.8"/>
<path d="M6.5 7.5 l1.5 1.5 l2.5 -3" fill="none" stroke="#fff" stroke-width="1.1"/>
</g>
<g transform="translate(290 224)">
<rect x="0" y="2.5" width="12.5" height="5" fill="#3a3a3a"/>
<rect x="2" y="0.5" width="7" height="2.5" fill="#d8d8d8" stroke="#666" stroke-width="0.5"/>
<rect x="1" y="7.5" width="10" height="2.5" fill="#555"/>
</g>
<g transform="translate(290 238)">
<rect x="0" y="2.5" width="12.5" height="5.5" fill="#454a4e"/>
<rect x="2" y="0.5" width="8.5" height="2.5" fill="#5fb0e0"/>
<rect x="2" y="8" width="8.5" height="3" fill="#fff" stroke="#555" stroke-width="0.6"/>
</g>
<g transform="translate(495.5 209)">
<rect x="0" y="2.5" width="12.5" height="5.5" fill="#454a4e"/>
<rect x="2" y="0.5" width="8.5" height="2.5" fill="#5fb0e0"/>
<rect x="2" y="8" width="8.5" height="3" fill="#fff" stroke="#555" stroke-width="0.6"/>
</g>
<text transform="translate(305.50 218.8) scale(0.9799 1)" font-size="9.7" fill="#1a1a1a" stroke="#1a1a1a" stroke-width="0.2">Brother DCP-L2540DW series Printer</text>
<text transform="translate(305.60 232.8) scale(0.8218 1)" font-size="9.7" fill="#1a1a1a" stroke="#1a1a1a" stroke-width="0.2">Fax</text>
<text transform="translate(305.60 247.2) scale(1.0293 1)" font-size="9.7" fill="#1a1a1a" stroke="#1a1a1a" stroke-width="0.2">Microsoft Print to PDF</text>
<svg x="508" y="205" width="111.8" height="20" overflow="hidden"><g transform="translate(-508 -205)"><text transform="translate(511.00 218.8) scale(1.0301 1)" font-size="9.7" fill="#1a1a1a" stroke="#1a1a1a" stroke-width="0.2">Microsoft XPS Documen</text><rect x="618.6" y="210" width="3" height="10" fill="#fff"/><path d="M618.8 214 h1.2" stroke="#1a1a1a" stroke-width="0.9"/></g></svg>
<!-- scrollbar -->
<rect x="286.5" y="263" width="333.5" height="12.5" fill="#f0f0f0"/>
<rect x="300.7" y="263.5" width="152.5" height="11.5" fill="#cdcdcd"/>
<path d="M295 266.5 l-3 2.7 l3 2.7" fill="none" stroke="#555" stroke-width="1.6"/>
<path d="M612 266.5 l3 2.7 l-3 2.7" fill="none" stroke="#555" stroke-width="1.6"/>
<!-- status -->
<text transform="translate(286.40 293.8) scale(0.9332 1)" font-size="9.5" fill="#1a1a1a" stroke="#1a1a1a" stroke-width="0.2">Status:</text>
<text transform="translate(286.40 308.1) scale(0.9600 1)" font-size="9.5" fill="#1a1a1a" stroke="#1a1a1a" stroke-width="0.2">Location:</text>
<text transform="translate(286.10 323.1) scale(0.9032 1)" font-size="9.5" fill="#1a1a1a" stroke="#1a1a1a" stroke-width="0.2">Comment:</text>
<text transform="translate(351.70 293.8) scale(0.9166 1)" font-size="9.5" fill="#1a1a1a" stroke="#1a1a1a" stroke-width="0.2">Ready</text>
<text transform="translate(351.00 308.1) scale(1.0156 1)" font-size="9.5" fill="#1a1a1a" stroke="#1a1a1a" stroke-width="0.2">http://</text>
<rect x="493" y="285.5" width="10.5" height="10.5" fill="#fff" stroke="#333" stroke-width="1"/>
<text transform="translate(506.60 294.4) scale(0.8969 1)" font-size="9.5" fill="#1a1a1a" stroke="#1a1a1a" stroke-width="0.2">Print to file</text>
<rect x="557.5" y="282.5" width="61" height="17" fill="#e1e1e1" stroke="#adadad"/>
<text transform="translate(564.60 294.4) scale(0.9209 1)" font-size="9.5" fill="#1a1a1a" stroke="#1a1a1a" stroke-width="0.2">Preferences</text>
<!-- page range -->
<rect x="278.5" y="347.5" width="360" height="93" fill="none" stroke="#dcdcdc"/>
<rect x="283" y="341" width="56" height="9" fill="#fff"/>
<text transform="translate(285.50 351.0) scale(0.9574 1)" font-size="9.5" fill="#1a1a1a" stroke="#1a1a1a" stroke-width="0.2">Page Range</text>
<circle cx="292.3" cy="363.4" r="5" fill="#fff" stroke="#333" stroke-width="1"/>
<circle cx="292.3" cy="363.4" r="2.6" fill="#1a1a1a"/>
<circle cx="292.3" cy="381" r="5" fill="#fff" stroke="#cfcfcf" stroke-width="1"/>
<circle cx="292.3" cy="400.2" r="5" fill="#fff" stroke="#cfcfcf" stroke-width="1"/>
<text transform="translate(300.50 367.0) scale(0.8806 1)" font-size="9.5" fill="#1a1a1a" stroke="#1a1a1a" stroke-width="0.2">All</text>
<text transform="translate(300.80 384.6) scale(0.9331 1)" font-size="9.5" fill="#8d8d8d">Selection</text>
<text transform="translate(300.80 404.0) scale(0.9573 1)" font-size="9.5" fill="#8d8d8d">Pages:</text>
</g>

<g id="prefs">
<!-- shadow -->
<rect x="373" y="301" width="453" height="397" fill="#000" opacity="0.3" filter="url(#blur5)"/>
<rect x="374.5" y="299.5" width="447.5" height="393" fill="#f0f0f0" stroke="#6f6f6f" stroke-width="1"/>
<rect x="375" y="300" width="446.5" height="21" fill="#ffffff"/>
<g transform="translate(377 304)">
<rect x="3" y="0" width="7.5" height="4" fill="#fff" stroke="#777" stroke-width="0.9"/>
<rect x="0.3" y="4" width="13.4" height="6.2" rx="1.2" fill="#6b6d6d"/>
<rect x="1.5" y="5.5" width="11" height="1.2" fill="#999"/>
<rect x="3" y="9" width="7.5" height="4" fill="#a7d0cc" stroke="#6b8f8b" stroke-width="0.8"/>
</g>
<text transform="translate(395.50 313.8) scale(0.9768 1)" font-size="10.0" fill="#1a1a1a" stroke="#1a1a1a" stroke-width="0.2">Printing Preferences</text>
<path d="M805.5 307 L813.5 315 M813.5 307 L805.5 315" stroke="#1a1a1a" stroke-width="1"/>
<!-- tabs -->
<rect x="381.5" y="329.5" width="36" height="15" fill="#f0f0f0" stroke="#d9d9d9"/>
<rect x="380.5" y="344.5" width="434" height="316" fill="#fff" stroke="#d9d9d9"/>
<rect x="417.5" y="327.5" width="67" height="17.5" fill="#fff" stroke="#d9d9d9"/>
<rect x="418" y="343" width="66" height="3" fill="#fff"/>
<text transform="translate(386.70 340.4) scale(0.9002 1)" font-size="9.5" fill="#1a1a1a" stroke="#1a1a1a" stroke-width="0.2">Layout</text>
<text transform="translate(424.00 338.9) scale(0.9324 1)" font-size="9.5" fill="#1a1a1a" stroke="#1a1a1a" stroke-width="0.2">Paper/Quality</text>
<!-- tray selection group -->
<rect x="392.5" y="363.5" width="410" height="73.5" fill="none" stroke="#dcdcdc"/>
<rect x="398" y="358" width="65" height="9" fill="#fff"/>
<text transform="translate(400.90 366.7) scale(0.9399 1)" font-size="10.0" fill="#1a1a1a" stroke="#1a1a1a" stroke-width="0.2">Tray Selection</text>
<text transform="translate(405.80 388.8) scale(0.9422 1)" font-size="10.0" fill="#1a1a1a" stroke="#1a1a1a" stroke-width="0.2">Paper Source:</text>
<text transform="translate(405.80 416.2) scale(0.9953 1)" font-size="10.0" fill="#1a1a1a" stroke="#1a1a1a" stroke-width="0.2">Media:</text>
<!-- combos -->
<rect x="497.5" y="378.5" width="291" height="20" fill="#fff" stroke="#7a7a7a"/>
<rect x="497.5" y="405.5" width="291" height="20" fill="#fff" stroke="#7a7a7a"/>
<rect x="499" y="407" width="273" height="16" fill="#0078d7"/>
<rect x="499.5" y="407.5" width="272" height="15" fill="none" stroke="#0a2a50" stroke-width="1" stroke-dasharray="1 1"/>
<text transform="translate(502.30 392.0) scale(1.0161 1)" font-size="10.0" fill="#1a1a1a" stroke="#1a1a1a" stroke-width="0.2">Manual</text>
<text transform="translate(502.30 419.3) scale(0.9830 1)" font-size="10.0" fill="#ffffff">Heavyweight Paper</text>
<path d="M778 386.5 l3.8 3.8 l3.8 -3.8" fill="none" stroke="#555" stroke-width="1.1"/>
<path d="M778 413.5 l3.8 3.8 l3.8 -3.8" fill="none" stroke="#555" stroke-width="1.1"/>
<!-- advanced -->
<rect x="729.5" y="634.5" width="72" height="19" fill="#e1e1e1" stroke="#adadad"/>
<text transform="translate(739.50 647.0) scale(0.9974 1)" font-size="10.0" fill="#1a1a1a" stroke="#1a1a1a" stroke-width="0.2">Advanced...</text>
<!-- OK / Cancel -->
<rect x="687" y="668.5" width="60" height="15.5" fill="#e1e1e1" stroke="#0078d7" stroke-width="2"/>
<text transform="translate(710.50 679.8) scale(0.8729 1)" font-size="10.0" fill="#1a1a1a" stroke="#1a1a1a" stroke-width="0.2">OK</text>
<rect x="754.5" y="667.5" width="61" height="17" fill="#e1e1e1" stroke="#adadad"/>
<text transform="translate(771.00 679.8) scale(0.8930 1)" font-size="10.0" fill="#1a1a1a" stroke="#1a1a1a" stroke-width="0.2">Cancel</text>
</g>

<g id="tooltip">
<rect x="21.5" y="328.5" width="50" height="35.5" rx="4" fill="#2e2e2e" stroke="#1e1e1e" stroke-width="1"/>
<text transform="translate(32.10 350.2) scale(0.9352 1)" font-size="10.5" fill="#e6e6e6">inches</text>
</g>
<!-- mouse cursor -->
<path d="M693.5 310.5 V324.5 L696.8 321.5 L699.3 327 L701.2 326.2 L698.8 320.8 L703.2 320.5 Z" fill="#fff" stroke="#111" stroke-width="0.9" stroke-linejoin="round"/>

</svg>
</body></html>
